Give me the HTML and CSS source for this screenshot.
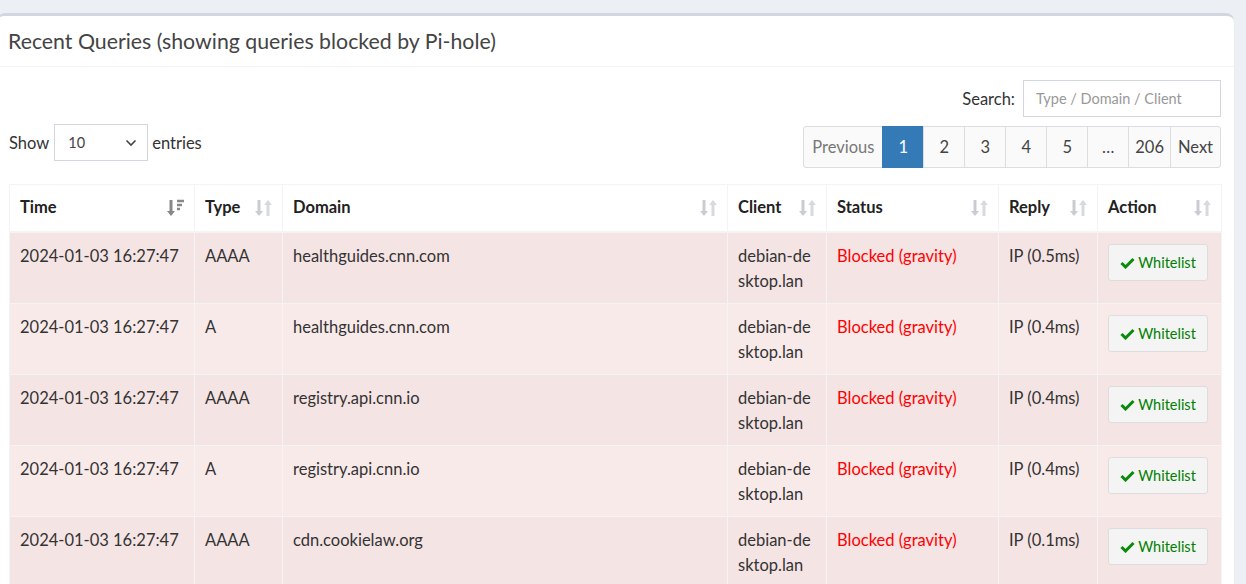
FILE: index.html
```html
<!DOCTYPE html>
<html>
<head>
<meta charset="utf-8">
<link rel="stylesheet" href="styles.css">
</head>
<body>
<div class="box">
  <div class="box-header">
    <h3 class="box-title">Recent Queries (showing queries blocked by Pi-hole)</h3>
  </div>
  <div class="box-body">
    <div class="filter-row">
      <label class="search-label">Search:</label>
      <input class="search-input" type="text" placeholder="Type / Domain / Client">
    </div>
    <div class="controls-row">
      <div class="length">
        <span>Show</span>
        <div class="select"><span>10</span>
          <svg class="chev" width="12" height="8" viewBox="0 0 12 8"><path d="M1.5 1.5 L6 6 L10.5 1.5" fill="none" stroke="#444" stroke-width="1.6"/></svg>
        </div>
        <span>entries</span>
      </div>
      <ul class="pagination">
        <li class="pg disabled first">Previous</li>
        <li class="pg active">1</li>
        <li class="pg">2</li>
        <li class="pg">3</li>
        <li class="pg">4</li>
        <li class="pg">5</li>
        <li class="pg">…</li>
        <li class="pg">206</li>
        <li class="pg last">Next</li>
      </ul>
    </div>

    <table class="queries">
      <colgroup>
        <col class="c-time"><col class="c-type"><col class="c-domain"><col class="c-client"><col class="c-status"><col class="c-reply"><col class="c-action">
      </colgroup>
      <thead>
        <tr>
          <th><div class="th-in"><span>Time</span>
            <svg class="sort" width="18" height="18" viewBox="0 0 18 18"><path d="M4 1 V14" stroke="#888" stroke-width="3"/><path d="M0 12 L4 17 L8 12 Z" fill="#888"/><path d="M10 2 H17 M10 6 H15 M10 10 H13" stroke="#888" stroke-width="2.4"/></svg></div></th>
          <th><div class="th-in"><span>Type</span>
            <svg class="sort" width="18" height="18" viewBox="0 0 18 18"><path d="M4 1 V14" stroke="#c9ccd2" stroke-width="3"/><path d="M0 12 L4 17 L8 12 Z" fill="#c9ccd2"/><path d="M13 4 V17" stroke="#d6d9de" stroke-width="3"/><path d="M9 6 L13 1 L17 6 Z" fill="#d6d9de"/></svg></div></th>
          <th><div class="th-in"><span>Domain</span>
            <svg class="sort" width="18" height="18" viewBox="0 0 18 18"><path d="M4 1 V14" stroke="#c9ccd2" stroke-width="3"/><path d="M0 12 L4 17 L8 12 Z" fill="#c9ccd2"/><path d="M13 4 V17" stroke="#d6d9de" stroke-width="3"/><path d="M9 6 L13 1 L17 6 Z" fill="#d6d9de"/></svg></div></th>
          <th><div class="th-in"><span>Client</span>
            <svg class="sort" width="18" height="18" viewBox="0 0 18 18"><path d="M4 1 V14" stroke="#c9ccd2" stroke-width="3"/><path d="M0 12 L4 17 L8 12 Z" fill="#c9ccd2"/><path d="M13 4 V17" stroke="#d6d9de" stroke-width="3"/><path d="M9 6 L13 1 L17 6 Z" fill="#d6d9de"/></svg></div></th>
          <th><div class="th-in"><span>Status</span>
            <svg class="sort" width="18" height="18" viewBox="0 0 18 18"><path d="M4 1 V14" stroke="#c9ccd2" stroke-width="3"/><path d="M0 12 L4 17 L8 12 Z" fill="#c9ccd2"/><path d="M13 4 V17" stroke="#d6d9de" stroke-width="3"/><path d="M9 6 L13 1 L17 6 Z" fill="#d6d9de"/></svg></div></th>
          <th><div class="th-in"><span>Reply</span>
            <svg class="sort" width="18" height="18" viewBox="0 0 18 18"><path d="M4 1 V14" stroke="#c9ccd2" stroke-width="3"/><path d="M0 12 L4 17 L8 12 Z" fill="#c9ccd2"/><path d="M13 4 V17" stroke="#d6d9de" stroke-width="3"/><path d="M9 6 L13 1 L17 6 Z" fill="#d6d9de"/></svg></div></th>
          <th><div class="th-in"><span>Action</span>
            <svg class="sort" width="18" height="18" viewBox="0 0 18 18"><path d="M4 1 V14" stroke="#c9ccd2" stroke-width="3"/><path d="M0 12 L4 17 L8 12 Z" fill="#c9ccd2"/><path d="M13 4 V17" stroke="#d6d9de" stroke-width="3"/><path d="M9 6 L13 1 L17 6 Z" fill="#d6d9de"/></svg></div></th>
        </tr>
      </thead>
      <tbody>
        <tr class="odd">
          <td>2024-01-03 16:27:47</td><td>AAAA</td><td>healthguides.cnn.com</td><td>debian-de<br>sktop.lan</td><td class="blocked">Blocked (gravity)</td><td>IP (0.5ms)</td>
          <td><button class="wl"><svg width="15" height="12" viewBox="0 0 15 12"><path d="M1.5 6 L5.5 10 L13.5 2" fill="none" stroke="#0a8a0a" stroke-width="3"/></svg>Whitelist</button></td>
        </tr>
        <tr class="even">
          <td>2024-01-03 16:27:47</td><td>A</td><td>healthguides.cnn.com</td><td>debian-de<br>sktop.lan</td><td class="blocked">Blocked (gravity)</td><td>IP (0.4ms)</td>
          <td><button class="wl"><svg width="15" height="12" viewBox="0 0 15 12"><path d="M1.5 6 L5.5 10 L13.5 2" fill="none" stroke="#0a8a0a" stroke-width="3"/></svg>Whitelist</button></td>
        </tr>
        <tr class="odd">
          <td>2024-01-03 16:27:47</td><td>AAAA</td><td>registry.api.cnn.io</td><td>debian-de<br>sktop.lan</td><td class="blocked">Blocked (gravity)</td><td>IP (0.4ms)</td>
          <td><button class="wl"><svg width="15" height="12" viewBox="0 0 15 12"><path d="M1.5 6 L5.5 10 L13.5 2" fill="none" stroke="#0a8a0a" stroke-width="3"/></svg>Whitelist</button></td>
        </tr>
        <tr class="even">
          <td>2024-01-03 16:27:47</td><td>A</td><td>registry.api.cnn.io</td><td>debian-de<br>sktop.lan</td><td class="blocked">Blocked (gravity)</td><td>IP (0.4ms)</td>
          <td><button class="wl"><svg width="15" height="12" viewBox="0 0 15 12"><path d="M1.5 6 L5.5 10 L13.5 2" fill="none" stroke="#0a8a0a" stroke-width="3"/></svg>Whitelist</button></td>
        </tr>
        <tr class="odd">
          <td>2024-01-03 16:27:47</td><td>AAAA</td><td>cdn.cookielaw.org</td><td>debian-de<br>sktop.lan</td><td class="blocked">Blocked (gravity)</td><td>IP (0.1ms)</td>
          <td><button class="wl"><svg width="15" height="12" viewBox="0 0 15 12"><path d="M1.5 6 L5.5 10 L13.5 2" fill="none" stroke="#0a8a0a" stroke-width="3"/></svg>Whitelist</button></td>
        </tr>
      </tbody>
    </table>
  </div>
</div>
</body>
</html>
```
FILE: styles.css
```css
html, body {
  margin: 0;
  padding: 0;
  background: #ecf0f5;
  overflow: hidden;
  height: 584px;
}
body {
  font-family: "Lato", "Source Sans Pro", sans-serif;
  font-size: 16.5px;
  color: #333;
}
.box {
  margin: 13px 12px 0 -3px;
  background: #fff;
  border-top: 3px solid #d2d6de;
  border-radius: 8px 8px 0 0;
  box-shadow: 0 1px 1px rgba(0,0,0,0.12);
}
.box-header {
  padding: 10px 11px;
  border-bottom: 1px solid #f4f4f4;
}
.box-title {
  margin: 0;
  font-size: 21.3px;
  font-weight: 400;
  line-height: 30px;
  color: #444;
}
.box-body {
  padding: 13px 13px 0 12px;
}
.filter-row {
  display: flex;
  justify-content: flex-end;
  align-items: center;
  gap: 8px;
}
.search-label {
  color: #333;
}
.search-input {
  box-sizing: border-box;
  width: 198px;
  height: 37px;
  border: 1px solid #d2d6de;
  padding: 0 12px;
  font-family: inherit;
  font-size: 14.5px;
  color: #555;
  outline: none;
}
.search-input::placeholder {
  color: #999;
}
.controls-row {
  display: flex;
  justify-content: space-between;
  align-items: flex-start;
  margin-top: 7px;
}
.length {
  display: flex;
  align-items: center;
  gap: 4px;
  height: 37px;
}
.select {
  box-sizing: border-box;
  width: 94px;
  height: 37px;
  border: 1px solid #d2d6de;
  display: flex;
  align-items: center;
  justify-content: space-between;
  padding: 0 10px 0 13px;
  font-size: 14.5px;
  color: #444;
  margin: 0 0 0 1px;
}
.pagination {
  list-style: none;
  margin: 2px 0 0 0;
  padding: 0;
  display: flex;
}
.pg {
  box-sizing: border-box;
  min-width: 42px;
  height: 42px;
  line-height: 40px;
  padding: 0 6px;
  text-align: center;
  background: #fafafa;
  border: 1px solid #ddd;
  margin-left: -1px;
  color: #444;
}
.pg.first {
  margin-left: 0;
  border-radius: 3px 0 0 3px;
  color: #777;
  width: 80px;
  padding: 0;
}
.pg.last {
  border-radius: 0 3px 3px 0;
  width: 51px;
  padding: 0;
}
.pg.active {
  background: #337ab7;
  border-color: #337ab7;
  color: #fff;
}
.queries {
  margin-top: 16px;
  width: 1212px;
  table-layout: fixed;
  border-collapse: collapse;
  border: 1px solid #f4f4f4;
}
.c-time { width: 185px; }
.c-type { width: 88px; }
.c-domain { width: 445px; }
.c-client { width: 99px; }
.c-status { width: 172px; }
.c-reply { width: 99px; }
.c-action { width: 124px; }
.queries th {
  text-align: left;
  font-weight: 700;
  color: #222;
  padding: 10px 9px 11px 10px;
  line-height: 25px;
  border: 1px solid #f4f4f4;
  border-bottom: 2px solid #f4f4f4;
  background: #fff;
}
.th-in {
  display: flex;
  justify-content: space-between;
  align-items: center;
}
.sort {
  display: block;
  flex: none;
}
.queries td {
  vertical-align: top;
  padding: 11px 10px 9px 10px;
  line-height: 25px;
  border: 1px solid #f4f4f4;
  border-bottom: none;
}
.queries tr.odd td {
  background: #f5e4e4;
}
.queries tr.even td {
  background: #f9eaea;
}
.queries td.blocked {
  color: #ff0000;
}
.wl {
  box-sizing: border-box;
  width: 100px;
  height: 37px;
  display: flex;
  align-items: center;
  justify-content: center;
  gap: 3px;
  background: #f4f4f4;
  border: 1px solid #ddd;
  border-radius: 3px;
  font-family: inherit;
  font-size: 14.5px;
  color: #008000;
  padding: 0;
}
```
